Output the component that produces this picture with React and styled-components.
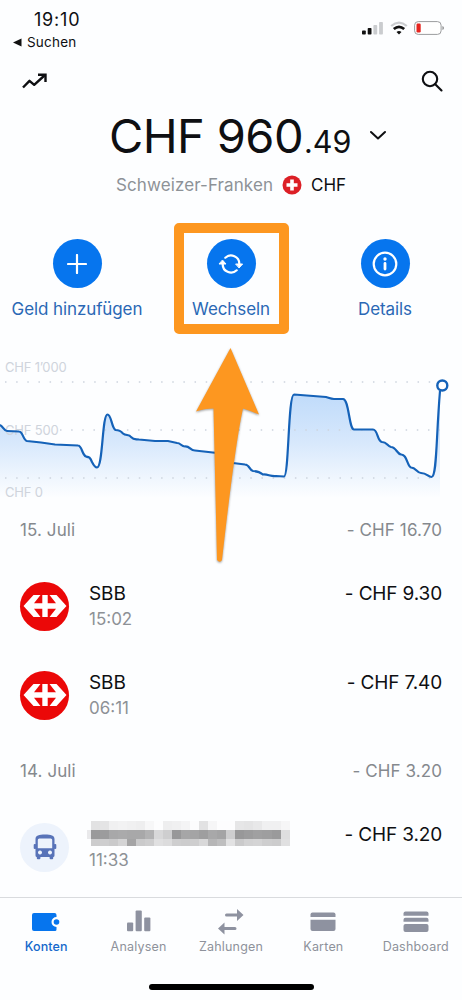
import React from "react";
import styled, { createGlobalStyle } from "styled-components";

const GlobalStyle = createGlobalStyle`
  * {
    box-sizing: border-box;
  }
  body {
    margin: 0;
    background: #fdfeff;
    font-family: Inter, "Liberation Sans", sans-serif;
    color: #0e0f12;
  }
  svg {
    display: block;
    flex: none;
  }
`;

const Screen = styled.div`
  position: relative;
  display: flex;
  flex-direction: column;
  width: 462px;
  height: 1000px;
  overflow: hidden;
`;

const StatusBar = styled.header`
  display: flex;
  justify-content: space-between;
  height: 56px;
  padding: 9px 18px 0 12px;
`;

const Clock = styled.div`
  padding-left: 22px;
  font-size: 18px;
  line-height: 22px;
  letter-spacing: 0.8px;
`;

const BackLink = styled.div`
  display: flex;
  align-items: center;
  gap: 5px;
  font-size: 13.5px;
  line-height: 22px;
  letter-spacing: 0.2px;
`;

const StatusIcons = styled.div`
  display: flex;
  align-items: center;
  gap: 6px;
  height: 38px;
`;

const TopBar = styled.div`
  display: flex;
  align-items: center;
  justify-content: space-between;
  height: 50px;
  padding: 0 19px 0 22px;
`;

const Balance = styled.div`
  display: flex;
  align-items: baseline;
  height: 62px;
  padding-left: 109px;
  line-height: 60px;
  white-space: nowrap;
`;

const Whole = styled.span`
  width: 195px;
  font-size: 47px;
  letter-spacing: -0.6px;
`;

const Cents = styled.span`
  width: 66px;
  font-size: 30.5px;
`;

const Currency = styled.div`
  display: flex;
  align-items: center;
  gap: 9px;
  height: 34px;
  padding-left: 116px;
  font-size: 17px;
  white-space: nowrap;
`;

const CurrencyName = styled.span`
  width: 157px;
  color: #8d9297;
  letter-spacing: 0.1px;
`;

const Actions = styled.div`
  display: grid;
  grid-template-columns: repeat(3, 154px);
  height: 146px;
  padding-top: 37px;
`;

const Action = styled.div`
  display: flex;
  flex-direction: column;
  align-items: center;
  gap: 10px;
  color: #2a68b5;
  font-size: 17px;
  line-height: 22px;
  letter-spacing: -0.1px;
  white-space: nowrap;
`;

const ActionCircle = styled.div`
  display: flex;
  align-items: center;
  justify-content: center;
  width: 49px;
  height: 49px;
  border-radius: 50%;
  background: #0675ee;
`;

const ChartBox = styled.div`
  height: 150.5px;

  svg {
    overflow: visible;
  }
  text {
    fill: #cfd4dc;
    font-size: 13px;
    letter-spacing: -0.2px;
  }
`;

const DayHeader = styled.div`
  display: flex;
  align-items: center;
  justify-content: space-between;
  height: 63px;
  padding: 0 20px;
  color: #85898e;
  font-size: 17px;
  letter-spacing: 0.1px;
`;

const Row = styled.div`
  display: flex;
  align-items: center;
  height: 89px;
  padding: 0 20px;
`;

const Badge = styled.div`
  display: flex;
  align-items: center;
  justify-content: center;
  width: 49px;
  height: 49px;
  margin-right: 20px;
  border-radius: 50%;
  background: ${(props) => props.$color};
`;

const RowText = styled.div`
  flex: 1;
`;

const Name = styled.div`
  display: flex;
  align-items: center;
  height: 26px;
  font-size: 19px;
  letter-spacing: -0.1px;
`;

const Time = styled.div`
  height: 26px;
  color: #8d9196;
  font-size: 17px;
  line-height: 26px;
`;

const Amount = styled.div`
  height: 51px;
  font-size: 19px;
  line-height: 26px;
  letter-spacing: -0.15px;
`;

const TabBar = styled.nav`
  display: grid;
  grid-template-columns: repeat(5, 1fr);
  height: 103px;
  margin-top: auto;
  border-top: 1px solid #d9dbde;
`;

const Tab = styled.div`
  display: flex;
  flex-direction: column;
  align-items: center;
  padding-top: 9px;
  color: ${(props) => (props.$active ? "#1569cc" : "#8e929b")};
  font-size: 12.5px;
  font-weight: ${(props) => (props.$active ? 500 : 400)};
  line-height: 18px;
  letter-spacing: ${(props) => (props.$active ? "0.1px" : "0.2px")};
`;

const TabIcon = styled.svg`
  width: 32px;
  height: 30px;
  margin-bottom: 1px;
  fill: ${(props) => (props.$active ? "#0675ee" : "#8e92a0")};
`;

const HomeIndicator = styled.div`
  position: absolute;
  left: 149px;
  bottom: 10px;
  width: 165px;
  height: 6px;
  border-radius: 3px;
  background: #000;
`;

const Highlight = styled.div`
  position: absolute;
  left: 174px;
  top: 223px;
  width: 115px;
  height: 111px;
  border: 10px solid #fd9720;
  border-radius: 5px;
`;

const Arrow = styled.svg`
  position: absolute;
  left: 190px;
  top: 344px;
  filter: drop-shadow(0 1px 1px rgba(60, 60, 60, 0.5));
`;

const LINE =
  "M0 77 C3 78 4 83 7 83 L19 83.5 C23 83.5 23 92 27 93 L41 94.5 L55 96.5 L78 97.5 C82 97.5 82 107 86 108.5 C89 109 90 109 92 114 C94 118 95 119.5 97 119.5 C103 119.5 102 66.500 107.500 66.500 C111.500 66.500 111.500 80 115.500 82 C119 82 121 83 123 85.500 C126 88 129 86 131 89 C134 92 135 91 139 91.500 L155 93 L168 93 L177 95 C181 95 181 98.500 185 98.500 C190 98 190 102.500 195 102.500 L217 105 L226 113 L233 115 L245 116.500 C250 117 249 122 253 123 C258 123 260 124 263 126.500 C268 126 270 128.500 276 128 L284 128.500 C289 128.500 288 46.500 294 46.500 L326 49 C330 50 330 51 334 51 L343 51 C349 51 349 81.500 354 81.500 L373 81.500 C378 81.500 377 93 382 94 C387 94 387 98 391 99 C396 99 397 106 401 106.500 C407 106 407 118 411 119.500 C416 119.500 417 125 421 125 C427 125 428 129 431.500 129 C437 129 436 90 440 43";

const TRANSACTIONS = [
  {
    day: "15. Juli",
    total: "- CHF 16.70",
    rows: [
      { icon: "sbb", name: "SBB", time: "15:02", amount: "- CHF 9.30" },
      { icon: "sbb", name: "SBB", time: "06:11", amount: "- CHF 7.40" },
    ],
  },
  {
    day: "14. Juli",
    total: "- CHF 3.20",
    rows: [{ icon: "bus", time: "11:33", amount: "- CHF 3.20" }],
  },
];

// grey levels of the censored merchant name, one list per pixel row
const MOSAIC = [
  [226, 228, 240, 242, 240, 238, 247, 253, 238, 240, 244, 252, 226, 246, 253, 253, 230, 228, 232, 240, 240, 246],
  [154, 156, 168, 170, 168, 168, 178, 216, 206, 152, 166, 164, 158, 168, 164, 206, 152, 156, 160, 158, 154, 222],
  [204, 206, 202, 212, 164, 202, 206, 224, 220, 206, 204, 206, 216, 182, 190, 226, 202, 210, 212, 206, 204, 224],
];

function Mosaic() {
  return (
    <svg width="204" height="26" style={{ marginLeft: -2 }} shapeRendering="crispEdges">
      <rect x="0" y="9" width="4" height="9" fill="#e9e9eb" />
      {MOSAIC.map((line, y) =>
        line.map((g, x) => (
          <rect
            key={x + "-" + y}
            x={3.7 + x * 9.04}
            y={y * 9}
            width="9.1"
            height={y === 2 ? 7 : 9}
            fill={`rgb(${g},${g},${g + 1})`}
          />
        ))
      )}
    </svg>
  );
}

function SbbLogo() {
  return (
    <svg width="44" height="24" viewBox="0 0 44 24" fill="#fff">
      <path d="M.5 12 10.500 1H17.500L11 9.200H19.300V1H24.700V9.200H33L26.500 1H33.500L43.500 12 33.500 23H26.500L33 14.800H24.700V23H19.300V14.800H11L17.500 23H10.500Z" />
    </svg>
  );
}

function BusIcon() {
  return (
    <svg width="24" height="26" viewBox="0 0 24 26" fill="#5873b8">
      <path
        fillRule="evenodd"
        d="M2.500 5C2.500 1.500 6 .5 12 .5S21.500 1.500 21.500 5V21.500Q21.500 23 20 23H4Q2.500 23 2.500 21.500ZM4.800 6V14.300H19.200V6Q19.200 4.500 17.700 4.500H6.300Q4.800 4.500 4.800 6ZM7 16.500a2 2 0 1 0 .01 0ZM17 16.500a2 2 0 1 0 .01 0Z"
      />
      <rect x=".7" y="10" width="2.500" height="5" rx="1" />
      <rect x="20.800" y="10" width="2.500" height="5" rx="1" />
      <rect x="3.800" y="21" width="3.600" height="4.300" rx="1" />
      <rect x="16.600" y="21" width="3.600" height="4.300" rx="1" />
    </svg>
  );
}

function StatusGlyphs() {
  return (
    <StatusIcons>
      <svg width="22" height="14">
        <rect x="0" y="9.500" width="3.800" height="4" rx="0.800" fill="#111" />
        <rect x="5.700" y="7" width="3.800" height="6.500" rx="0.800" fill="#111" />
        <rect x="11.400" y="4" width="3.800" height="9.500" rx="0.800" fill="#cacccf" />
        <rect x="17.100" y="1" width="3.800" height="12.500" rx="0.800" fill="#cacccf" />
      </svg>
      <svg width="18" height="14" fill="none" strokeWidth="2.300">
        <path d="M1.200 5Q9-1.800 16.800 5" stroke="#cacccf" />
        <path d="M3.800 8Q9 3.600 14.200 8" stroke="#111" strokeWidth="2.700" />
        <path d="M9 13.500 6.500 11Q9 8.800 11.500 11Z" fill="#111" />
      </svg>
      <svg width="30" height="14">
        <rect x=".6" y=".6" width="26.500" height="12.800" rx="3.600" fill="#fff" stroke="#9b9c9e" />
        <rect x="2.500" y="2.500" width="4.200" height="9" rx="1.200" fill="#e5241f" />
        <path d="M28.500 5v4q1.300-.6 1.300-2t-1.300-2Z" fill="#77787a" />
      </svg>
    </StatusIcons>
  );
}

function BalanceChart() {
  return (
    <ChartBox>
      <svg width="462" height="150" viewBox="0 0 462 150">
        <defs>
          <linearGradient id="area" x1="0" y1="38" x2="0" y2="150" gradientUnits="userSpaceOnUse">
            <stop offset="0" stopColor="#bcd9fa" />
            <stop offset="0.500" stopColor="#d7e8fc" />
            <stop offset="1" stopColor="#fdfeff" />
          </linearGradient>
        </defs>
        <path d={LINE + " V150 H0 Z"} fill="url(#area)" />
        {[34, 82, 130].map((y) => (
          <line
            key={y}
            x1={y === 82 ? 60 : 5}
            x2="440"
            y1={y}
            y2={y}
            stroke="#cdd4de"
            strokeWidth="1.300"
            strokeDasharray="1.500 9.650"
          />
        ))}
        <text x="5" y="23.500">CHF 1’000</text>
        <text x="5" y="86.500">CHF 500</text>
        <text x="5" y="149">CHF 0</text>
        <path d={LINE} fill="none" stroke="#1562b8" strokeWidth="2.200" />
        <circle cx="442.300" cy="37.500" r="5" fill="#fff" stroke="#1562b8" strokeWidth="2.400" />
      </svg>
    </ChartBox>
  );
}

function App() {
  return (
    <>
      <GlobalStyle />
      <Screen>
        <StatusBar>
          <div>
            <Clock>19:10</Clock>
            <BackLink>
              <svg width="10" height="9">
                <path d="M1 4.500 9.500 .5V8.500Z" fill="#111" />
              </svg>
              Suchen
            </BackLink>
          </div>
          <StatusGlyphs />
        </StatusBar>

        <TopBar>
          <svg width="26" height="18" fill="none" stroke="#0e0f12" strokeWidth="2.400">
            <path d="M1 15.500 7.500 8.800 12.200 12.800 23 3" strokeLinejoin="round" />
            <path d="M16 2.700H23.500V10" />
          </svg>
          <svg width="22" height="22" fill="none" stroke="#0e0f12" strokeWidth="2.100">
            <circle cx="9" cy="9" r="7.200" />
            <path d="M14 14 20.500 20.500" strokeLinecap="round" />
          </svg>
        </TopBar>

        <Balance>
          <Whole>CHF 960</Whole>
          <Cents>.49</Cents>
          <svg width="16" height="27" fill="none" stroke="#0e0f12" strokeWidth="2">
            <path d="M1 6 8 12.500 15 6" strokeLinecap="round" strokeLinejoin="round" />
          </svg>
        </Balance>
        <Currency>
          <CurrencyName>Schweizer-Franken</CurrencyName>
          <svg width="20" height="20">
            <circle cx="10" cy="10" r="9.500" fill="#dc1f26" />
            <path d="M8.200 4.500h3.600v3.700h3.700v3.600h-3.700v3.700H8.200v-3.700H4.500V8.200h3.700Z" fill="#fff" />
          </svg>
          <span>CHF</span>
        </Currency>

        <Actions>
          <Action>
            <ActionCircle>
              <svg width="20" height="20" stroke="#fff" strokeWidth="2.200" strokeLinecap="round">
                <path d="M10 1V19M1 10H19" />
              </svg>
            </ActionCircle>
            Geld hinzufügen
          </Action>
          <Action>
            <ActionCircle>
              <svg width="26" height="22" fill="none" stroke="#fff" strokeWidth="2.200" strokeLinecap="round">
                <path d="M7.300 4.700A8.300 8.300 0 0 1 21.300 11" />
                <path d="M18.700 17.300A8.300 8.300 0 0 1 4.700 11" />
                <path d="M18 11H24.600L21.300 14.700Z" fill="#fff" strokeWidth="1" strokeLinejoin="round" />
                <path d="M1.400 11H8L4.700 7.300Z" fill="#fff" strokeWidth="1" strokeLinejoin="round" />
              </svg>
            </ActionCircle>
            Wechseln
          </Action>
          <Action>
            <ActionCircle>
              <svg width="26" height="26" fill="none" stroke="#fff" strokeWidth="2.200">
                <circle cx="13" cy="13" r="11.300" />
                <path d="M13 12.500V18" strokeWidth="2.800" strokeLinecap="round" />
                <circle cx="13" cy="8" r="1.700" fill="#fff" stroke="none" />
              </svg>
            </ActionCircle>
            Details
          </Action>
        </Actions>

        <BalanceChart />

        {TRANSACTIONS.map((group) => (
          <React.Fragment key={group.day}>
            <DayHeader>
              <span>{group.day}</span>
              <span>{group.total}</span>
            </DayHeader>
            {group.rows.map((row) => (
              <Row key={row.time}>
                <Badge $color={row.icon === "sbb" ? "#eb0808" : "#edf3fc"}>
                  {row.icon === "sbb" ? <SbbLogo /> : <BusIcon />}
                </Badge>
                <RowText>
                  <Name>{row.name || <Mosaic />}</Name>
                  <Time>{row.time}</Time>
                </RowText>
                <Amount>{row.amount}</Amount>
              </Row>
            ))}
          </React.Fragment>
        ))}

        <TabBar>
          <Tab $active>
            <TabIcon $active viewBox="0 0 32 30">
              <path d="M4 6H24.500Q26.500 6 26.500 8V10A5 5 0 0 0 26.500 20V22.500Q26.500 24 25 24H4Q2 24 2 22V8Q2 6 4 6Z" />
              <circle cx="26.500" cy="15" r="2.800" />
            </TabIcon>
            Konten
          </Tab>
          <Tab>
            <TabIcon viewBox="0 0 32 30">
              <rect x="4" y="15.500" width="6.200" height="8.800" rx="1" />
              <rect x="12.600" y="3.500" width="6.200" height="20.800" rx="1" />
              <rect x="21.200" y="10.500" width="6.200" height="13.800" rx="1" />
            </TabIcon>
            Analysen
          </Tab>
          <Tab>
            <TabIcon viewBox="0 0 32 30">
              <path d="M11.500 6.500H22V2L28.500 8 22 14V9.500H11.500Q10 9.500 10 8T11.500 6.500Z" />
              <path d="M20 20H9.500V15.500L3 21.500 9.500 27.500V23H20Q21.500 23 21.500 21.500T20 20Z" />
            </TabIcon>
            Zahlungen
          </Tab>
          <Tab>
            <TabIcon viewBox="0 0 32 30">
              <path d="M5.500 5.500H26.500Q28.500 5.500 28.500 7.500V10H3.500V7.500Q3.500 5.500 5.500 5.500Z" />
              <path d="M3.500 12.800H28.500V22Q28.500 24 26.500 24H5.500Q3.500 24 3.500 22Z" />
            </TabIcon>
            Karten
          </Tab>
          <Tab>
            <TabIcon viewBox="0 0 32 30">
              <path d="M5.500 4.500H26.500Q28.500 4.500 28.500 6.500V8.800H3.500V6.500Q3.500 4.500 5.500 4.500Z" />
              <path d="M5.500 10.800H26.500Q28.500 10.800 28.500 12.800V14.800H3.500V12.800Q3.500 10.800 5.500 10.800Z" />
              <path d="M5.500 17H26.500Q28.500 17 28.500 19V23Q28.500 25 26.500 25H5.500Q3.500 25 3.500 23V19Q3.500 17 5.500 17Z" />
            </TabIcon>
            Dashboard
          </Tab>
        </TabBar>

        <Highlight />
        <Arrow width="74" height="224">
          <path
            d="M40.500 4 69 70.500Q61 67 53 64.500Q45 100 32 216Q30 219.500 27 216L23.500 64.500Q14 64.500 6 67.500Z"
            fill="#fd9720"
          />
        </Arrow>
        <HomeIndicator />
      </Screen>
    </>
  );
}

export default App;
